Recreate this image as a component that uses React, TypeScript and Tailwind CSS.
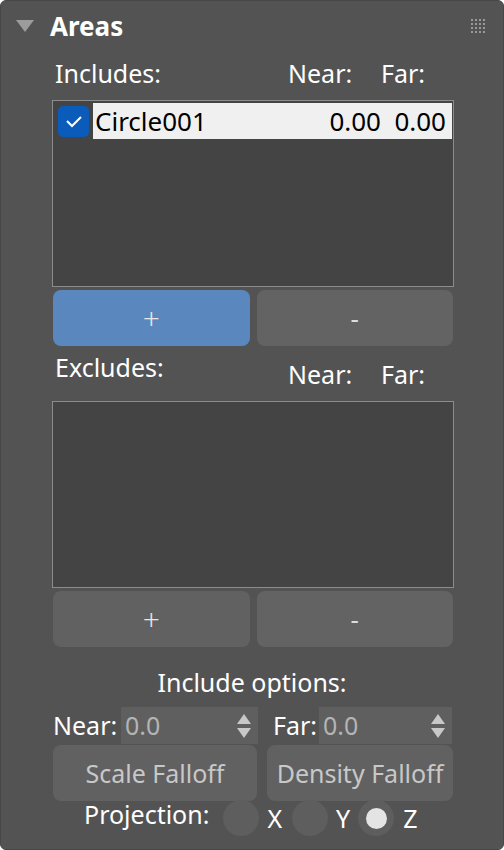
import React from "react";

const font = { fontFamily: '"Noto Sans", "Open Sans", sans-serif' };

function GripDots() {
  const dots = [];
  for (let r = 0; r < 4; r++) {
    for (let c = 0; c < 4; c++) {
      dots.push(<rect key={`${r}-${c}`} x={c * 4} y={r * 4} width="2" height="2" fill="#9a9a9a" />);
    }
  }
  return (
    <svg width="14" height="14" viewBox="0 0 14 14">
      {dots}
    </svg>
  );
}

function ListBox({ children }: { children?: React.ReactNode }) {
  return (
    <div className="ml-[51px] w-[402px] h-[187px] border border-[#8c8c8c] bg-[#444444] p-[1px]">
      {children}
    </div>
  );
}

function AddRemove({ active }: { active?: boolean }) {
  return (
    <div className="ml-[52px] w-[400px] flex gap-[7px] mt-[3px]">
      <button
        className={`h-[56px] flex-1 rounded-[8px] text-[30px] font-light leading-none text-[#e6e6e6] ${
          active ? "bg-[#5b87bf]" : "bg-[#616161]"
        }`}
      >
        +
      </button>
      <button className="h-[56px] flex-1 rounded-[8px] bg-[#636363] text-[26px] leading-none text-[#dcdcdc]">
        -
      </button>
    </div>
  );
}

function Spinner({ value, width }: { value: string; width: string }) {
  return (
    <div className={`${width} h-[37px] shrink-0 bg-[#5f5f5f] flex items-center justify-between pl-[4px] pr-[6px]`}>
      <span className="text-[25px] leading-none text-[#b4b4b4]">{value}</span>
      <svg width="16" height="28" viewBox="0 0 16 28">
        <polygon points="8,2 15,12 1,12" fill="#c8c8c8" />
        <polygon points="1,16 15,16 8,26" fill="#c8c8c8" />
      </svg>
    </div>
  );
}

function Radio({ checked }: { checked?: boolean }) {
  return (
    <div className="w-[36px] h-[36px] shrink-0 rounded-full bg-[#5e5e5e] flex items-center justify-center">
      {checked && <div className="w-[21px] h-[21px] rounded-full bg-[#e4e4e4]" />}
    </div>
  );
}

export default function App() {
  return (
    <div
      className="w-[504px] h-[850px] bg-[#535353] border border-[#474747] rounded-[6px] text-white overflow-hidden"
      style={font}
    >
      {/* header */}
      <div className="flex items-center h-[50px] pl-[15px] pr-[18px]">
        <svg width="18" height="14" viewBox="0 0 18 14">
          <polygon points="0,1 18,1 9,13" fill="#9c9c9c" />
        </svg>
        <span className="ml-[16px] text-[26px] leading-none font-bold">Areas</span>
        <div className="ml-auto">
          <GripDots />
        </div>
      </div>

      {/* includes */}
      <div className="flex h-[40px] pl-[54px] pt-[10px] text-[25px] leading-none">
        <span className="w-[233px]">Includes:</span>
        <span className="w-[93px]">Near:</span>
        <span>Far:</span>
      </div>
      <div className="mt-[9px]">
        <ListBox>
          <div className="flex items-center h-[36px] mt-[1px]">
            <div className="ml-[4px] w-[31px] h-[31px] shrink-0 rounded-[5px] bg-[#0b5cba] flex items-center justify-center">
              <svg width="18" height="14" viewBox="0 0 18 14">
                <polyline points="2,7 7,12 16,3" fill="none" stroke="white" strokeWidth="2" />
              </svg>
            </div>
            <div className="ml-[4px] flex-1 h-[36px] bg-[#f0f0f0] text-black flex items-center text-[26px] leading-none pl-[2px] pr-[6px]">
              <span className="flex-1">Circle001</span>
              <span className="w-[80px] text-right">0.00</span>
              <span className="w-[65px] text-right">0.00</span>
            </div>
          </div>
        </ListBox>
      </div>
      <AddRemove active />

      {/* excludes */}
      <div className="flex h-[55px] pl-[54px] text-[25px] leading-none">
        <span className="w-[233px] pt-[9px]">Excludes:</span>
        <span className="w-[93px] pt-[16px]">Near:</span>
        <span className="pt-[16px]">Far:</span>
      </div>
      <ListBox />
      <AddRemove />

      {/* include options */}
      <div className="text-center text-[25px] leading-none mt-[23px]">Include options:</div>
      <div className="flex items-center mt-[12px] ml-[52px] text-[25px] leading-none">
        <span className="w-[68px]">Near:</span>
        <Spinner value="0.0" width="w-[137px]" />
        <span className="ml-[15px] w-[46px]">Far:</span>
        <Spinner value="0.0" width="w-[133px]" />
      </div>
      <div className="flex ml-[52px] gap-[10px] mt-[1px]">
        <button className="w-[204px] h-[56px] rounded-[8px] bg-[#616161] text-[25px] leading-none text-[#c8c8c8]">
          Scale Falloff
        </button>
        <button className="w-[186px] h-[56px] rounded-[8px] bg-[#616161] text-[25px] leading-none text-[#c8c8c8]">
          Density Falloff
        </button>
      </div>
      <div className="flex items-center ml-[83px] -mt-[1px] text-[25px] leading-none">
        <span className="mr-[14px] -mt-[8px]">Projection:</span>
        <Radio />
        <span className="ml-[8px] mr-[10px]">X</span>
        <Radio />
        <span className="ml-[8px] mr-[8px]">Y</span>
        <Radio checked />
        <span className="ml-[9px]">Z</span>
      </div>
    </div>
  );
}
